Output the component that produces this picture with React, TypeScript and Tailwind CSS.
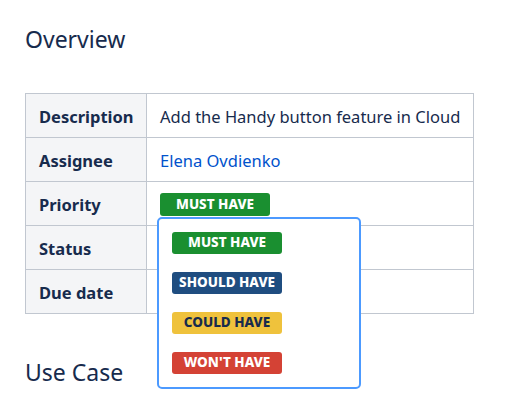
import React from "react";

const badgeColors: Record<string, string> = {
  must: "bg-[#1a8f30] text-white",
  should: "bg-[#1f4d80] text-white",
  could: "bg-[#efc23c] text-[#172b4d]",
  wont: "bg-[#d44235] text-white",
};

function Badge({ kind, label }: { kind: string; label: string }) {
  return (
    <span
      className={`inline-flex h-[22px] w-[110px] items-center justify-center rounded-[3px] text-[13.5px] font-extrabold uppercase leading-none ${badgeColors[kind]}`}
    >
      {label}
    </span>
  );
}

const rows = [
  { label: "Description" },
  { label: "Assignee" },
  { label: "Priority" },
  { label: "Status" },
  { label: "Due date" },
];

export default function App() {
  return (
    <div
      className="min-h-[401px] w-[524px] bg-white pl-[25px] text-[#172b4d]"
      style={{ fontFamily: '"Noto Sans", "Open Sans", sans-serif' }}
    >
      <h1 className="pt-[24px] text-[23px] font-normal leading-[30px]">Overview</h1>

      <table className="mt-[39px] w-[449px] table-fixed border-collapse text-[16.5px]">
        <colgroup>
          <col className="w-[121px]" />
          <col />
        </colgroup>
        <tbody>
          {rows.map((r) => (
            <tr key={r.label} className="h-[44px]">
              <th className="whitespace-nowrap border border-[#c1c7d0] bg-[#f4f5f7] pl-[13px] pr-0 pt-[3px] text-left font-bold">
                {r.label}
              </th>
              <td
                className={`relative whitespace-nowrap border border-[#c1c7d0] px-[13px] ${
                  r.label === "Priority" ? "" : "pt-[3px]"
                }`}
              >
                {r.label === "Description" && "Add the Handy button feature in Cloud"}
                {r.label === "Assignee" && <span className="text-[#0052cc]">Elena Ovdienko</span>}
                {r.label === "Priority" && (
                  <>
                    <span className="inline-flex h-[23px] w-[110px] items-center justify-center rounded-[3px] bg-[#1a8f30] text-[13.5px] font-extrabold uppercase leading-none text-white">
                      Must have
                    </span>
                    <div className="absolute left-[10px] top-[35px] z-10 flex h-[172px] w-[204px] flex-col gap-[18px] rounded-[5px] border-2 border-[#4c9aff] bg-white px-[13px] pt-[13px]">
                      <Badge kind="must" label="Must have" />
                      <Badge kind="should" label="Should have" />
                      <Badge kind="could" label="Could have" />
                      <Badge kind="wont" label="Won't have" />
                    </div>
                  </>
                )}
              </td>
            </tr>
          ))}
        </tbody>
      </table>

      <h2 className="mt-[43px] text-[23px] font-normal leading-[30px]">Use Case</h2>
    </div>
  );
}
